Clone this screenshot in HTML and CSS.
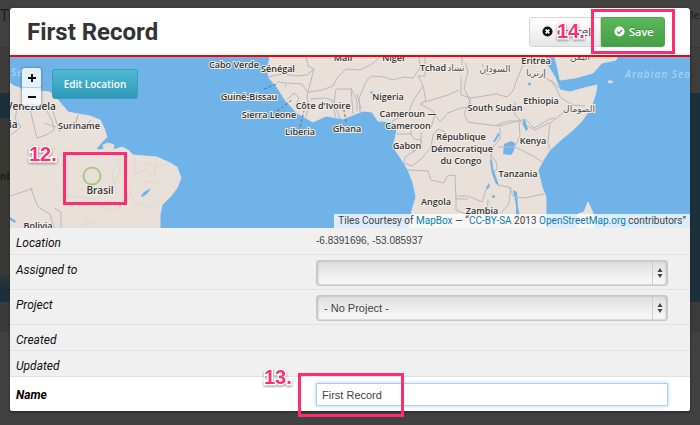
FILE: index.html
```html
<!DOCTYPE html>
<html lang="en">
<head>
<meta charset="utf-8">
<title>First Record</title>
<link rel="stylesheet" href="styles.css">
</head>
<body>
<div class="page" aria-hidden="true">
  <div class="page-head"><span>T(</span><span>le</span></div>
  <div class="page-tools"></div>
  <div class="page-map"><span class="page-land">nb</span></div>
  <div class="page-foot"></div>
</div>

<main class="modal">
  <header class="modal-head">
    <h1>First Record</h1>
    <div class="actions">
      <button class="btn cancel" type="button">
        <svg class="icon" viewBox="0 0 12 12"><circle cx="6" cy="6" r="5.5" fill="#111"/><path d="M4 4l4 4M8 4l-4 4" stroke="#fff" stroke-width="1.8"/></svg>
        Cancel
      </button>
      <button class="btn save" type="button">
        <svg class="icon" viewBox="0 0 12 12"><circle cx="6" cy="6" r="5.5" fill="#fff"/><path d="M3.3 6.1l2 2 3.5-3.7" fill="none" stroke="#46a546" stroke-width="1.5"/></svg>
        Save
      </button>
      <span class="mark mark-save"></span>
      <span class="step step-save">14.</span>
    </div>
  </header>

  <section class="map">
    <svg class="map-art" viewBox="10 57 680 171" preserveAspectRatio="xMidYMid slice">
      <rect class="sea" x="10" y="57" width="680" height="171"/>
      <g class="land">
        <path d="M10 83L14 86L20 88L23 92L26 87L40 91L50 92L58 100L68 112L78 114L90 116L100 120L104 128L107 137L102 142L96 149L99 150L104 149L103 145L108 143L114 145L113 150L122 147L128 150L133 155L145 156L157 157L168 162L177 167L181 178L177 188L171 196L162 205L160 215L160 228L10 228z"/>
        <path d="M270 57L267 70L269 78L277 87L285 100L297 113L313 122L326 116L343 119L363 111L372 112L378 121L393 122L397 130L393 147L400 157L408 170L413 183L416 197L412 210L409 228L546 228L546 197L542 187L538 170L544 159L550 150L562 139L573 130L582 121L588 112L593 102L596 92L597 85L584 88L570 92L560 90L555 77L548 66L545 57z"/>
        <path d="M555 57L558 70L560 80L575 78L593 73L602 63L616 60L617 57z"/>
        <path d="M577 228L578 214L584 212L588 202L593 213L594 228zM608 81l4 0 1 1-4 1z"/>
      </g>
      <g class="lake">
        <path d="M504 144l7-3 4 2-1 8-3 4-8-1zM523 119l2 1 3 9-2 2-3-6zM493 142l5-9 2 1-5 8zM490 161l2-2 1 9 3 9 3 8-3-1-4-10zM513 190l4 2 1 15 2 9-4 1 0-12zM487 186l2-3 1 3-3 4zM141 196l3-4 7-4-4 6-5 3zM10 217l6 4-1 2-5-3z"/>
        <circle cx="529.500" cy="84" r="1.500"/><circle cx="493.500" cy="196.500" r="1.500"/><circle cx="371.500" cy="92.500" r="1.200"/>
      </g>
      <g class="borders">
        <path d="M25 91l-3 15-5 3-2 10 6 8-10 8M22 110l8-1 4 17 3 12 9-3 8-5-2-10-8-14M53 111l6 20 9-5 6 3 4-14M78 115l-3 9 7 5 9-9M44 123l12 4M10 196l21-7 7 18 12 7 4 14M33 190l-3-2M54 208l7 4 0 16"/>
        <path d="M268 77l14-3 14 2 11-1 7-6-6-3-2-9M314 69l-5 19-2 8 2 11-4 13M277 82l10 1-2 4M288 83l14 1 6 9M287 100l7-7 5 5-4 9M309 92l13-2 11-4 5-9 8-8 14 1 12-6 8-7M310 99l15-1 7 2 4 19M336 89l15 0 2 25M336 89l-2 14 6 16M351 88l6 13 0 10M357 94l4 15M367 80l-8 18 1 14M367 80l5-4 12 1 8 3 12-3 9 1 7-10-1-11M418 75l5 11-10 15-5 13-12 5-4 2M419 76l6 0 0-19M423 86l3 15-6 3 13 7 7 11 8-9 13-5 11-1-4-10-4-9 4-17-3-8M425 102l13-4 10-3 11-5M397 134l14 0 0-8 20 0M421 132l0 12-9 8M431 128l4-14M411 134l3 5 7 1 0 8-7 3-9 6-1 6 8 3 9-7 10-12 2-12 5-6 7 3M408 170l20 1 3 9 13 3 3-7 8-1 1 24 12 0M456 195v15l10 4"/>
        <path d="M461 77l0 18 10 3 13-2 12-2 11 3 6-6 3-9 5-12 4-13M471 98l-7 16 4 8 14 2 17 2 19-5 7-2 9 9 16-9 5-1M515 102l0 13 5 5 3 5M530 76l12-1 11 8 8 15 12 7 12 1M573 105l-23 18-2 20 2 6M500 128l0 11-7 8-3 16M498 147h17l18 9 11 7M497 125l11-4 11 0 1 15-5 10M490 155l6 6 1 8-4 5M497 185l12 2 5 10 10 1 20-4M487 186l-5 16-14-6-10 0M511 187l-2 17-8 9M488 200l-1 14M526 125l9 5 14-7"/>
        <path d="M462 57l0 8M482 64l5 11 13-3M551 80l8 8"/>
      </g>
      <g class="soft">
        <path d="M53 145l7 10 10-2M112 152l8 16-4 14-8 4M125 160l-13 10 3 18M135 158l0 16 10-4 8 8 4-14M146 163l12 4 13-5M142 181l16 2 7-8M128 188l7 15 14 4 8-6M54 186l10 9 30 4 14 13 18-9M78 213l22 15M80 226l16-5"/>
      </g>
      <g class="leader">
        <path d="M264 89l13-5M277 111l15-11M300 127l4-16M346 122l-3-17"/>
      </g>
      <g class="places">
        <text x="234" y="68">Cabo Verde</text>
        <text x="278" y="72">Sénégal</text>
        <text x="343" y="61">Mali</text>
        <text x="394" y="61">Niger</text>
        <text x="433" y="71">Tchad</text>
        <text x="249" y="100">Guiné-Bissau</text>
        <text x="323" y="109">Côte d'Ivoire</text>
        <text x="269" y="118">Sierra Leone</text>
        <text x="300" y="135">Liberia</text>
        <text x="347" y="132">Ghana</text>
        <text x="388" y="100">Nigeria</text>
        <text x="408" y="117">Cameroun —</text>
        <text x="408" y="129">Cameroon</text>
        <text x="407" y="149">Gabon</text>
        <text x="461" y="140">République</text>
        <text x="462" y="152">Démocratique</text>
        <text x="461" y="164">du Congo</text>
        <text x="436" y="205">Angola</text>
        <text x="482" y="214">Zambia</text>
        <text x="495" y="111">South Sudan</text>
        <text x="541" y="104">Ethiopia</text>
        <text x="533" y="144">Kenya</text>
        <text x="518" y="177">Tanzania</text>
        <text x="536" y="64">Eritrea</text>
        <text x="79" y="129">Suriname</text>
        <text x="38" y="229">Bolivia</text>
        <text class="arabic" x="456" y="71">تشاد</text>
        <text class="arabic" x="495" y="72">السودان</text>
        <text class="arabic" x="536" y="76">إرتريا</text>
        <text class="arabic" x="580" y="60">اليمن</text>
        <text class="arabic" x="579" y="112">الصومال</text>
        <text class="big" x="31" y="110">Venezuela</text>
        <text class="big start" x="9" y="128">ia</text>
        <text class="big" x="100" y="194">Brasil</text>
      </g>
      <text class="ocean" x="625" y="78">Arabian Sea</text>
      <text class="ocean" x="11" y="76">Se</text>
      <circle class="pin" cx="92" cy="176" r="8.500"/>
    </svg>
    <div class="map-controls">
      <div class="zoom">
        <button type="button" aria-label="Zoom in"><svg viewBox="0 0 10 10"><path d="M5 1v8M1 5h8"/></svg></button>
        <button type="button" aria-label="Zoom out"><svg viewBox="0 0 10 10"><path d="M1 5h8"/></svg></button>
      </div>
      <button class="edit" type="button">Edit Location</button>
    </div>
    <span class="mark mark-map"></span>
    <span class="step step-map">12.</span>
    <div class="credit">Tiles Courtesy of <a href="#">MapBox</a> — “<a href="#">CC-BY-SA</a> 2013 <a href="#">OpenStreetMap.org</a> contributors”</div>
  </section>

  <form class="fields">
    <div class="row"><span class="label">Location</span><span class="value">-6.8391696, -53.085937</span></div>
    <div class="row tall">
      <label class="label" for="assigned">Assigned to</label>
      <div class="select">
        <select id="assigned"><option></option></select>
        <svg class="arrows" viewBox="0 0 6 10"><path d="M3 0l2.500 4h-5zM3 10l2.500-4h-5z"/></svg>
      </div>
    </div>
    <div class="row tall">
      <label class="label" for="project">Project</label>
      <div class="select">
        <select id="project"><option>- No Project -</option></select>
        <svg class="arrows" viewBox="0 0 6 10"><path d="M3 0l2.500 4h-5zM3 10l2.500-4h-5z"/></svg>
      </div>
    </div>
    <div class="row"><span class="label">Created</span></div>
    <div class="row"><span class="label">Updated</span></div>
    <div class="row name">
      <label class="label" for="name">Name</label>
      <div class="text">
        <input id="name" type="text" value="First Record">
        <span class="mark mark-name"></span>
        <span class="step step-name">13.</span>
      </div>
    </div>
  </form>
</main>
</body>
</html>
```
FILE: styles.css
```css
* { box-sizing: border-box; }

body {
  margin: 0;
  background: #414141;
  font-family: "Liberation Sans", Arial, sans-serif;
  font-size: 11px;
  color: #444;
  overflow: hidden;
}

button, input, select { font: inherit; margin: 0; }

/* dimmed page under the dialog */
.page { height: 100vh; color: #1c1c1c; }
.page-head {
  display: flex;
  justify-content: space-between;
  height: 48px;
  padding-top: 4px;
  font: 16px "Open Sans", sans-serif;
  border-bottom: 1px solid #383838;
}
.page-head span:last-child { width: 9px; padding-top: 4px; font-size: 10px; overflow: hidden; }
.page-tools { height: 45px; background: #3e3d3c; }
.page-map { height: 209px; background: #1c303b; }
.page-land {
  display: block;
  width: 10px;
  height: 195px;
  padding-top: 76px;
  background: linear-gradient(#1c303b 25px, #3b3936 26px 178px, #1c303b 195px);
  font: bold 10px "Open Sans", sans-serif;
}
.page-foot { height: 30px; background: #3b3b3b; }

.modal {
  position: absolute;
  top: 8px;
  left: 10px;
  right: 10px;
  background: #fff;
  border-radius: 3px;
  box-shadow: 0 1px 3px #222;
}

.modal-head {
  display: flex;
  align-items: center;
  justify-content: space-between;
  height: 49px;
  padding: 0 25px 0 17px;
  border-bottom: 2px solid #f00;
}
h1 {
  margin: 0;
  font: bold 24px Roboto, sans-serif;
  color: #333;
}
.actions { display: flex; position: relative; }
.btn {
  display: flex;
  align-items: center;
  gap: 4px;
  height: 30px;
  padding: 0 12px;
  border: 1px solid #d5d5d5;
  font: 11px "Open Sans", sans-serif;
}
.icon { flex: none; width: 11px; height: 11px; }
.cancel {
  width: 72px;
  background: linear-gradient(#fff, #e6e6e6);
  border-radius: 3px 0 0 3px;
  color: #333;
}
.save {
  width: 64px;
  background: linear-gradient(#5bb75b, #46a046);
  border-color: #4ca64c;
  border-radius: 0 3px 3px 0;
  color: #fff;
  font-weight: 600;
  text-shadow: 0 -1px 0 #3a8a3a;
}

.map { position: relative; overflow: hidden; height: 171px; }
.map-art { display: block; width: 100%; height: 100%; }
.sea { fill: #70b3e8; }
.land { fill: #e8e0d9; stroke: #dce0e4; stroke-width: 1; }
.lake { fill: #70b3e8; }
.borders, .soft { fill: none; stroke: #b8b8c2; stroke-width: 1; stroke-linejoin: round; }
.soft { stroke: #ddd8d2; }
.leader { stroke: #66727c; stroke-width: 1; stroke-dasharray: 3 2; }
.places {
  font: 600 9px "Open Sans", sans-serif;
  fill: #333;
  stroke: #f1eeea;
  stroke-width: 2px;
  stroke-linejoin: round;
  paint-order: stroke;
  text-anchor: middle;
}
.places .arabic { font: 9px "DejaVu Sans", sans-serif; fill: #555; }
.places .big { font-size: 10px; }
.places .start { text-anchor: start; }
.ocean { font: italic 600 10px "Open Sans", sans-serif; letter-spacing: 1px; fill: #a9d0f0; }
.pin { fill: none; stroke: #a9c98e; stroke-width: 2; }

.map-controls {
  position: absolute;
  top: 11px;
  left: 12px;
  display: flex;
  align-items: flex-start;
  gap: 11px;
}
.zoom {
  display: flex;
  flex-direction: column;
  width: 19px;
  border-radius: 3px;
  box-shadow: 0 0 3px #567;
  overflow: hidden;
}
.zoom button {
  display: grid;
  place-items: center;
  height: 19px;
  padding: 0;
  border: 0;
  background: #f5faffdd;
}
.zoom button + button { border-top: 1px solid #bcd; }
.zoom svg { width: 10px; height: 10px; stroke: #111; stroke-width: 2; }
.edit {
  width: 86px;
  height: 30px;
  margin-top: 1px;
  padding: 0;
  border: 1px solid #3a9fbd;
  border-radius: 3px;
  background: linear-gradient(#4fb9d4, #2f9ab8);
  color: #fff;
  font: 600 10px "Open Sans", sans-serif;
}
.credit {
  position: absolute;
  right: 0;
  bottom: 0;
  padding: 0 4px;
  background: #ffffffc0;
  font: 10px/14px Roboto, sans-serif;
  white-space: nowrap;
}
.credit a { color: #0a7fae; text-decoration: none; }

.fields { background: #f0f0f0; border-radius: 0 0 3px 3px; }
.row {
  display: flex;
  height: 26px;
  padding: 0 22px 0 6px;
  border-bottom: 1px solid #e2e2e2;
}
.row:first-child { height: 27px; }
.tall { height: 35px; }
.label {
  width: 300px;
  flex: none;
  padding-top: 6px;
  font: italic 400 12px/18px Roboto, sans-serif;
  color: #111;
}
.value { padding-top: 5px; font-size: 10px; line-height: 16px; }
.select, .text { position: relative; flex: 1; padding-top: 5px; }
select {
  display: block;
  width: 100%;
  height: 26px;
  padding: 0 7px;
  appearance: none;
  border: 1px solid #c8c8c8;
  border-radius: 3px;
  background:
    linear-gradient(#cfcfcf, #cfcfcf) right 14px top / 1px 100% no-repeat,
    linear-gradient(#dedede, #fafafa);
  box-shadow: inset 1px 0 2px #bbb, inset -1px 0 2px #bbb;
  color: #444;
}
.arrows {
  position: absolute;
  top: 13px;
  right: 5px;
  width: 6px;
  height: 10px;
  fill: #444;
}
.name { height: 34px; background: #fff; border: 0; border-radius: 0 0 3px 3px; }
.name .label { font-weight: 700; padding-top: 9px; color: #000; }
.text { padding-top: 6px; }
input {
  display: block;
  width: 100%;
  height: 23px;
  padding: 0 5px;
  border: 1px solid #b5cfe0;
  background: #fff;
  box-shadow: 0 0 4px #a5d5f5;
  color: #444;
}

/* numbered callouts */
.mark { position: absolute; border: 3px solid #ff2d6f; pointer-events: none; }
.step {
  position: absolute;
  color: #ff2d6f;
  font: bold 20px/20px "Liberation Sans", Arial, sans-serif;
  -webkit-text-stroke: 3px #fff;
  paint-order: stroke fill;
  filter: drop-shadow(0 1px 1px #888);
  pointer-events: none;
}
.mark-save { top: -8px; right: -10px; width: 84px; height: 45px; }
.step-save { top: 4px; left: 28px; }
.mark-map { top: 95px; left: 53px; width: 64px; height: 53px; }
.step-map { top: 87px; left: 19px; }
.mark-name { top: -4px; left: -18px; width: 106px; height: 44px; }
.step-name { top: -10px; left: -52px; }
```
